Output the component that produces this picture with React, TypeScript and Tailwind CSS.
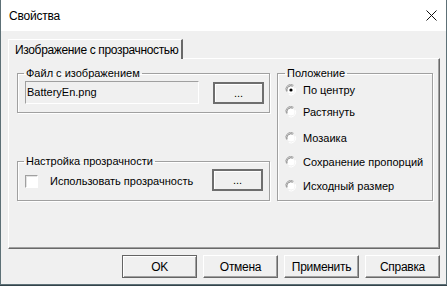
const font = "font-['Liberation_Sans',Arial,sans-serif]";

function Btn({ label, isDefault }: { label: string; isDefault?: boolean }) {
  if (isDefault) {
    return (
      <div className="w-[75px] h-[23px] border border-[#646464] bg-[#f0f0f0] flex items-center justify-center text-[12px] tracking-[-0.3px] whitespace-nowrap text-black shadow-[inset_1px_1px_0_#fff,inset_-1px_-1px_0_#a0a0a0]">
        {label}
      </div>
    );
  }
  return (
    <div className="w-[75px] h-[23px] border-t border-l border-white border-r border-b border-r-[#696969] border-b-[#696969] bg-[#f0f0f0] flex items-center justify-center text-[12px] tracking-[-0.3px] whitespace-nowrap text-black shadow-[inset_-1px_-1px_0_#a0a0a0]">
      {label}
    </div>
  );
}

function DotsBtn() {
  return (
    <div className="w-[51px] h-[22px] border-2 border-[#6e6e6e] bg-[#f0f0f0] flex items-center justify-center text-[11px] text-black leading-none shadow-[inset_1px_1px_0_#fff]">
      ...
    </div>
  );
}

function Radio({ checked, label, className }: { checked?: boolean; label: string; className?: string }) {
  return (
    <div className={`flex items-center h-[16px] ${className ?? ''}`}>
      <svg width="12" height="12" viewBox="0 0 12 12" className="ml-[7px] shrink-0">
        <path d="M1.5 7.5 A4.8 4.8 0 0 1 8.5 1.3" fill="none" stroke="#a0a0a0" strokeWidth="1" />
        <path d="M2.4 7.2 A3.8 3.8 0 0 1 7.6 2.3" fill="none" stroke="#696969" strokeWidth="1" />
        <circle cx="6" cy="6" r="3.6" fill="#fff" />
        <path d="M10.3 4.2 A4.8 4.8 0 0 1 3.8 10.5" fill="none" stroke="#fff" strokeWidth="1" />
        {checked && <circle cx="6" cy="6" r="1.6" fill="#000" />}
      </svg>
      <span className="ml-[6px] text-[11px] text-black leading-none whitespace-nowrap">{label}</span>
    </div>
  );
}

function Group({ title, className, children, legendClass }: { title: string; className?: string; children: React.ReactNode; legendClass?: string }) {
  return (
    <fieldset className={`border border-[#a0a0a0] shadow-[inset_1px_1px_0_#fff,1px_1px_0_#fff] ${className ?? ''}`}>
      <legend className={`text-[11px] leading-[12px] text-black px-[2px] whitespace-nowrap ${legendClass ?? 'ml-[5px]'}`}>{title}</legend>
      {children}
    </fieldset>
  );
}

export default function App() {
  return (
    <div className={`w-[447px] h-[286px] bg-[#34434a] overflow-hidden ${font}`}>
      <div className="w-[447px] h-[285px] border-l border-r border-b border-[#5d7076] bg-[#f0f0f0] flex flex-col">
        <div className="h-[31px] bg-white flex items-center justify-between pl-[8px] pr-[9px] shrink-0">
          <span className="text-[12px] tracking-[-0.2px] text-black">Свойства</span>
          <svg width="11" height="11" viewBox="0 0 11 11">
            <path d="M0.5 0.5 L10.5 10.5 M10.5 0.5 L0.5 10.5" stroke="#111" strokeWidth="1" />
          </svg>
        </div>

        <div className="flex flex-col pl-[7px] pt-[8px]">
          <div className="flex">
            <div className="relative z-10 -mb-[1px] h-[20px] w-[175px] bg-[#f0f0f0] border-l border-t border-white border-r-2 border-r-[#696969] pl-[6px] flex items-center">
              <span className="text-[12px] tracking-[-0.35px] whitespace-nowrap text-black">Изображение с прозрачностью</span>
            </div>
          </div>
          <div className="w-[432px] h-[191px] border-t border-l border-white border-r border-b border-r-[#696969] border-b-[#696969] shadow-[inset_-1px_-1px_0_#a0a0a0] flex pl-[8px] pt-[8px] gap-[7px]">
            <div className="flex flex-col w-[253px]">
              <Group title="Файл с изображением" className="h-[46px] w-[253px]" legendClass="ml-[6px]">
                <div className="flex items-start pl-[7px] pt-[2px]">
                  <div className="w-[174px] h-[23px] border-t border-l border-[#a0a0a0] border-r border-b border-r-white border-b-white flex items-center pl-[1px] text-[11px] text-black">
                    BatteryEn.png
                  </div>
                  <div className="ml-[14px] mt-[1px]">
                    <DotsBtn />
                  </div>
                </div>
              </Group>
              <Group title="Настройка прозрачности" className="h-[46px] w-[253px] mt-[42px]" legendClass="ml-[6px]">
                <div className="flex items-center pl-[7px] pt-[2px]">
                  <div className="w-[13px] h-[13px] mt-[3px] border-t border-l border-[#a0a0a0] border-r border-b border-r-white border-b-white bg-white shadow-[inset_1px_1px_0_#e3e3e3]" />
                  <span className="ml-[12px] mt-[2px] text-[11px] text-black whitespace-nowrap">Использовать прозрачность</span>
                  <div className="ml-auto mr-[6px]">
                    <DotsBtn />
                  </div>
                </div>
              </Group>
            </div>
            <Group title="Положение" className="h-[134px] w-[156px]" legendClass="ml-[7px]">
              <Radio checked label="По центру" className="mt-[3px]" />
              <Radio label="Растянуть" className="mt-[6px]" />
              <Radio label="Мозаика" className="mt-[10px]" />
              <Radio label="Сохранение пропорций" className="mt-[8px]" />
              <Radio label="Исходный размер" className="mt-[8px]" />
            </Group>
          </div>
        </div>

        <div className="flex justify-end gap-[6px] pr-[6px] mt-[6px]">
          <Btn label="OK" isDefault />
          <Btn label="Отмена" />
          <Btn label="Применить" />
          <Btn label="Справка" />
        </div>
      </div>
    </div>
  );
}
